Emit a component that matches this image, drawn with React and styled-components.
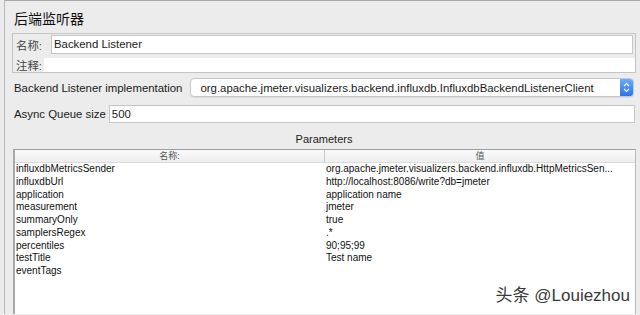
import React from 'react';
import styled, { createGlobalStyle } from 'styled-components';

const GlobalStyle = createGlobalStyle`
  html, body {
    margin: 0;
    padding: 0;
    background: #ececec;
  }
  body {
    font-family: "Liberation Sans", "Noto Sans CJK SC", sans-serif;
    color: #1a1a1a;
  }
`;

const Screen = styled.div`
  position: relative;
  width: 640px;
  height: 315px;
  overflow: hidden;
  background: #ececec;
`;

const Frame = styled.div`
  margin-left: 4px;
  height: 314px;
  border-left: 1px solid #b9b9b9;
  border-top: 1px solid #a9a9a9;
  box-sizing: border-box;
  padding: 7px 4px 0 7px;
  display: flex;
  flex-direction: column;
  background: #ececec;
`;

const Title = styled.div`
  font-size: 14px;
  line-height: 22px;
  padding-left: 2px;
  color: #111;
`;

const GroupBox = styled.div`
  margin-top: 3px;
  border: 1px solid #c4c4c4;
  padding: 1px 0 0 3px;
  display: flex;
  flex-direction: column;
  gap: 3px;
  height: 40px;
  box-sizing: border-box;
`;

const FieldRow = styled.div`
  display: flex;
  align-items: center;
  gap: ${p => p.$gap || 4}px;
`;

const Label = styled.span`
  font-size: ${p => p.$size || 11.4}px;
  color: ${p => p.$muted ? '#444' : '#1a1a1a'};
  white-space: nowrap;
`;

const TextBox = styled.div`
  flex: 1;
  height: ${p => p.$h || 18}px;
  box-sizing: border-box;
  background: #fff;
  border: ${p => p.$flat ? 'none' : '1px solid #c6c6c6'};
  font-size: 11.4px;
  line-height: ${p => (p.$h || 18) - 2}px;
  padding-left: 2px;
  margin-left: ${p => p.$ml || 0}px;
  margin-right: ${p => p.$mr || 0}px;
`;

const Section = styled.div`
  display: flex;
  align-items: center;
  margin-top: ${p => p.$mt || 0}px;
  padding-left: 2px;
`;

const Select = styled.div`
  margin-left: 8px;
  flex: 1;
  height: 19px;
  box-sizing: border-box;
  margin-right: 2px;
  background: #fff;
  border: 1px solid #c8c8c8;
  border-radius: 4px;
  display: flex;
  align-items: center;
  font-size: 11.4px;
  padding-left: 9px;
  box-shadow: 0 1px 1px rgba(0,0,0,0.08);
`;

const SelectText = styled.span`
  flex: 1;
  white-space: nowrap;
  overflow: hidden;
`;

const Stepper = styled.div`
  width: 13px;
  height: 17px;
  border-radius: 0 3px 3px 0;
  background: linear-gradient(#6aaefb, #2a72e4);
  display: flex;
  align-items: center;
  justify-content: center;
`;

const ParamsTitle = styled.div`
  margin-top: 10px;
  text-align: center;
  font-size: 11px;
  line-height: 13px;
  color: #222;
`;

const Table = styled.div`
  margin-top: 3px;
  margin-left: 1px;
  flex: 1;
  background: #fff;
  border-left: 2px solid #a9a9a9;
  border-top: 1px solid #9f9f9f;
  border-right: 1px solid #b8b8b8;
`;

const HeaderRow = styled.div`
  display: grid;
  grid-template-columns: 309px 1fr;
  height: 12px;
  background: linear-gradient(#fafafa, #eeeeee);
  border-bottom: 1px solid #dcdcdc;
`;

const HeaderCell = styled.div`
  font-size: 9px;
  line-height: 12px;
  color: #555;
  text-align: center;
  border-left: ${p => p.$divider ? '1px solid #c9c9c9' : 'none'};
`;

const Row = styled.div`
  display: grid;
  grid-template-columns: 310px 1fr;
  height: 12.75px;
  font-size: 10px;
  line-height: 12.75px;
  color: #111;
`;

const Cell = styled.div`
  white-space: nowrap;
  overflow: hidden;
  padding-left: 1px;
`;

const Watermark = styled.div`
  position: absolute;
  right: 10px;
  bottom: 9px;
  font-size: 17px;
  line-height: 20px;
  color: #3a3a3a;
  text-shadow: 0 0 2px #fff, 0 0 2px #fff;
`;

const params = [
  ['influxdbMetricsSender', 'org.apache.jmeter.visualizers.backend.influxdb.HttpMetricsSen...'],
  ['influxdbUrl', 'http://localhost:8086/write?db=jmeter'],
  ['application', 'application name'],
  ['measurement', 'jmeter'],
  ['summaryOnly', 'true'],
  ['samplersRegex', '.*'],
  ['percentiles', '90;95;99'],
  ['testTitle', 'Test name'],
  ['eventTags', ''],
];

const StepperIcon = () => (
  <svg width="7" height="11" viewBox="0 0 7 11">
    <path d="M1 4 L3.5 1.5 L6 4 M1 7 L3.5 9.5 L6 7" stroke="#fff" strokeWidth="1.2" fill="none" />
  </svg>
);

export default function App() {
  return (
    <Screen>
      <GlobalStyle />
      <Frame>
        <Title>后端监听器</Title>
        <GroupBox>
          <FieldRow $gap={9}>
            <Label $muted>名称:</Label>
            <TextBox $h={19} $mr={2}>Backend Listener</TextBox>
          </FieldRow>
          <FieldRow $gap={2}>
            <Label $muted>注释:</Label>
            <TextBox $h={14} $flat />
          </FieldRow>
        </GroupBox>
        <Section $mt={5}>
          <Label>Backend Listener implementation</Label>
          <Select>
            <SelectText>org.apache.jmeter.visualizers.backend.influxdb.InfluxdbBackendListenerClient</SelectText>
            <Stepper><StepperIcon /></Stepper>
          </Select>
        </Section>
        <Section $mt={8}>
          <Label>Async Queue size</Label>
          <TextBox $h={18} $mr={1} $ml={3}>500</TextBox>
        </Section>
        <ParamsTitle>Parameters</ParamsTitle>
        <Table>
          <HeaderRow>
            <HeaderCell>名称:</HeaderCell>
            <HeaderCell $divider>值</HeaderCell>
          </HeaderRow>
          {params.map(([k, v]) => (
            <Row key={k}>
              <Cell>{k}</Cell>
              <Cell>{v}</Cell>
            </Row>
          ))}
        </Table>
      </Frame>
      <Watermark>头条 @Louiezhou</Watermark>
    </Screen>
  );
}
